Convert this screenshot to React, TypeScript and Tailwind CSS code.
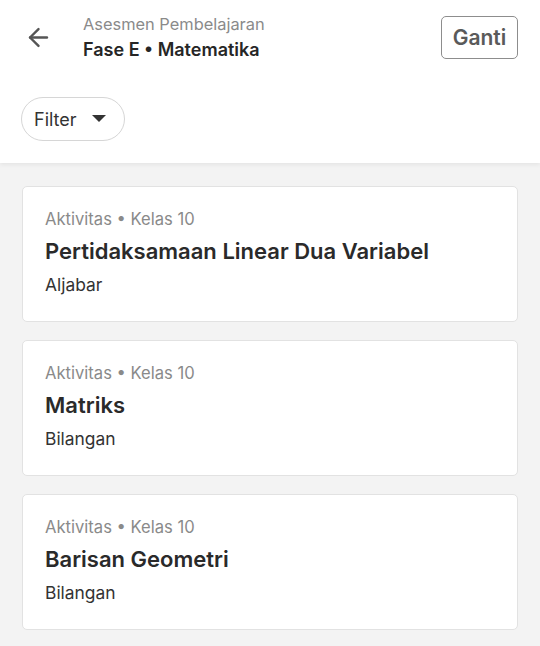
import {ArrowLeft} from 'lucide-react';

const items = [
	{meta: 'Aktivitas • Kelas 10', title: 'Pertidaksamaan Linear Dua Variabel', topic: 'Aljabar'},
	{meta: 'Aktivitas • Kelas 10', title: 'Matriks', topic: 'Bilangan'},
	{meta: 'Aktivitas • Kelas 10', title: 'Barisan Geometri', topic: 'Bilangan'},
];

export default function App() {
	return (
		<div className="w-[540px] h-[646px] overflow-hidden bg-[#f3f3f3] font-['Inter',sans-serif]">
			<header className="relative z-10 h-[163px] bg-white shadow-[0_2px_4px_rgba(0,0,0,0.06)]">
				<div className="flex items-start px-[22px] pt-4">
					<button className="mt-[7px] ml-[2px] text-[#555]">
						<ArrowLeft size={29} strokeWidth={2} />
					</button>
					<div className="ml-[30px] flex-1 -mt-[3px]">
						<p className="text-[16.4px] leading-[22px] text-[#8a8a8a]">Asesmen Pembelajaran</p>
						<p className="mt-[3px] text-[18px] leading-[24px] font-semibold text-[#262626]">Fase E • Matematika</p>
					</div>
					<button className="h-[43px] w-[77px] rounded-[5px] border border-[#8d8d8d] text-[21px] font-semibold text-[#5a5a5a]">
						Ganti
					</button>
				</div>
				<div className="px-[21px] pt-[35px]">
					<button className="flex h-[44px] w-[104px] items-center rounded-full border border-[#d6d6d6] pl-[12px] text-[18px] text-[#333]">
						Filter
						<svg width="14" height="8" viewBox="0 0 14 8" className="ml-[15px]">
							<path d="M0 0h14L7 7z" fill="#333" />
						</svg>
					</button>
				</div>
			</header>
			<main className="flex flex-col gap-[18px] px-[22px] pt-[23px]">
				{items.map((item) => (
					<div key={item.title} className="h-[136px] rounded-[5px] border border-[#e2e2e2] bg-white px-[22px] pt-[20px]">
						<p className="text-[16.6px] leading-6 text-[#8a8a8a]">{item.meta}</p>
						<p className="mt-1.5 text-[22px] leading-7 font-semibold text-[#2a2a2a]">{item.title}</p>
						<p className="mt-2 text-[17.4px] leading-6 text-[#333]">{item.topic}</p>
					</div>
				))}
			</main>
		</div>
	);
}
